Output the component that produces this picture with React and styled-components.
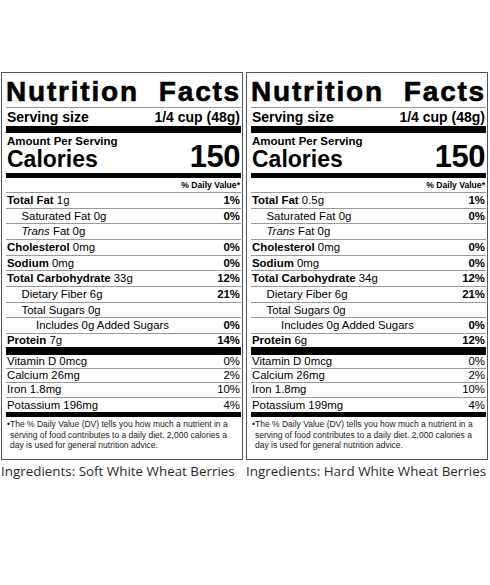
import React from "react";
import styled, { createGlobalStyle } from "styled-components";

const GlobalStyle = createGlobalStyle`
  html, body {
    margin: 0;
    padding: 0;
    background: #fff;
  }
`;

const Page = styled.div`
  display: flex;
  gap: 3px;
  padding: 72px 0 0 1px;
`;

const Column = styled.div`
  width: 242px;
  display: flex;
  flex-direction: column;
`;

const Label = styled.section`
  box-sizing: border-box;
  width: 242px;
  border: 1px solid #555;
  padding: 0 1px 0 4px;
  font-family: "Liberation Sans", Arial, sans-serif;
  color: #000;
`;

const Title = styled.h1`
  margin: 0;
  padding-top: 4px;
  font-size: 28px;
  line-height: 30px;
  font-weight: 700;
  letter-spacing: 1.8px;
  -webkit-text-stroke: 0.6px #000;
  text-align: justify;
  text-align-last: justify;
  border-bottom: 1px solid #999;
`;

const Serving = styled.div`
  display: flex;
  justify-content: space-between;
  padding: 1px 1px 0 1px;
  font-size: 14px;
  line-height: 17px;
  font-weight: 700;
`;

const Bar = styled.div`
  height: ${p => p.h}px;
  background: #000;
`;

const CalorieBlock = styled.div`
  display: flex;
  justify-content: space-between;
  align-items: flex-end;
  padding: 1.5px 1px 3.5px 1px;
`;

const Amount = styled.div`
  font-size: 11.5px;
  line-height: 13px;
  font-weight: 700;
`;

const Calories = styled.div`
  font-size: 23px;
  line-height: 22px;
  font-weight: 700;
`;

const Big = styled.div`
  font-size: 31px;
  line-height: 26px;
  font-weight: 700;
  letter-spacing: -0.5px;
`;

const DailyValue = styled.div`
  padding: 1px 1px 0 0;
  text-align: right;
  font-size: 8.6px;
  line-height: 13px;
  font-weight: 700;
  border-bottom: 1px solid #999;
`;

const Row = styled.div`
  display: flex;
  justify-content: space-between;
  padding: 0 1px 0 ${p => 1 + (p.indent || 0) * 14.5}px;
  font-size: 11.4px;
  line-height: ${p => p.lh || 14.67}px;
  border-bottom: ${p => (p.last ? "none" : "1px solid #999")};
`;

const Strong = styled.b`
  font-weight: 700;
`;

const Pct = styled.span`
  font-weight: ${p => (p.plain ? 400 : 700)};
`;

const Footnote = styled.p`
  margin: 0;
  padding: 2px 2px 8px 4px;
  font-size: 8.5px;
  line-height: 10.7px;
  color: #222;
  text-indent: -3px;
`;

const Ingredients = styled.div`
  margin-top: 2px;
  font-family: "Open Sans", sans-serif;
  font-size: 13.4px;
  line-height: 18px;
  color: #2b2b2b;
  white-space: nowrap;
`;

const labels = [
  {
    fat: "1g",
    fatPct: "1%",
    carb: "33g",
    protein: "7g",
    proteinPct: "14%",
    potassium: "196mg",
    ingredients: "Soft White Wheat Berries",
  },
  {
    fat: "0.5g",
    fatPct: "1%",
    carb: "34g",
    protein: "6g",
    proteinPct: "12%",
    potassium: "199mg",
    ingredients: "Hard White Wheat Berries",
  },
];

const NutritionLabel = ({ data }) => (
  <Column>
    <Label>
      <Title>Nutrition Facts</Title>
      <Serving>
        <span>Serving size</span>
        <span>1/4 cup (48g)</span>
      </Serving>
      <Bar h={7} />
      <CalorieBlock>
        <div>
          <Amount>Amount Per Serving</Amount>
          <Calories>Calories</Calories>
        </div>
        <Big>150</Big>
      </CalorieBlock>
      <Bar h={5} />
      <DailyValue>% Daily Value*</DailyValue>

      <Row>
        <span><Strong>Total Fat</Strong> {data.fat}</span>
        <Pct>{data.fatPct}</Pct>
      </Row>
      <Row indent={1}>
        <span>Saturated Fat 0g</span>
        <Pct>0%</Pct>
      </Row>
      <Row indent={1}>
        <span><i>Trans</i> Fat 0g</span>
      </Row>
      <Row>
        <span><Strong>Cholesterol</Strong> 0mg</span>
        <Pct>0%</Pct>
      </Row>
      <Row>
        <span><Strong>Sodium</Strong> 0mg</span>
        <Pct>0%</Pct>
      </Row>
      <Row>
        <span><Strong>Total Carbohydrate</Strong> {data.carb}</span>
        <Pct>12%</Pct>
      </Row>
      <Row indent={1}>
        <span>Dietary Fiber 6g</span>
        <Pct>21%</Pct>
      </Row>
      <Row indent={1}>
        <span>Total Sugars 0g</span>
      </Row>
      <Row indent={2}>
        <span>Includes 0g Added Sugars</span>
        <Pct>0%</Pct>
      </Row>
      <Row last lh={13}>
        <span><Strong>Protein</Strong> {data.protein}</span>
        <Pct>{data.proteinPct}</Pct>
      </Row>
      <Bar h={8} />

      <Row lh={13.2}>
        <span>Vitamin D 0mcg</span>
        <Pct plain>0%</Pct>
      </Row>
      <Row lh={13.2}>
        <span>Calcium 26mg</span>
        <Pct plain>2%</Pct>
      </Row>
      <Row lh={13.2}>
        <span>Iron 1.8mg</span>
        <Pct plain>10%</Pct>
      </Row>
      <Row last lh={14.2}>
        <span>Potassium {data.potassium}</span>
        <Pct plain>4%</Pct>
      </Row>
      <Bar h={5} />
      <Footnote>
        •The % Daily Value (DV) tells you how much a nutrient in a
        <br />
        serving of food contributes to a daily diet. 2,000 calories a
        <br />
        day is used for general nutrition advice.
      </Footnote>
    </Label>
    <Ingredients>Ingredients: {data.ingredients}</Ingredients>
  </Column>
);

const App = () => (
  <>
    <GlobalStyle />
    <Page>
      {labels.map(d => (
        <NutritionLabel key={d.ingredients} data={d} />
      ))}
    </Page>
  </>
);

export default App;
